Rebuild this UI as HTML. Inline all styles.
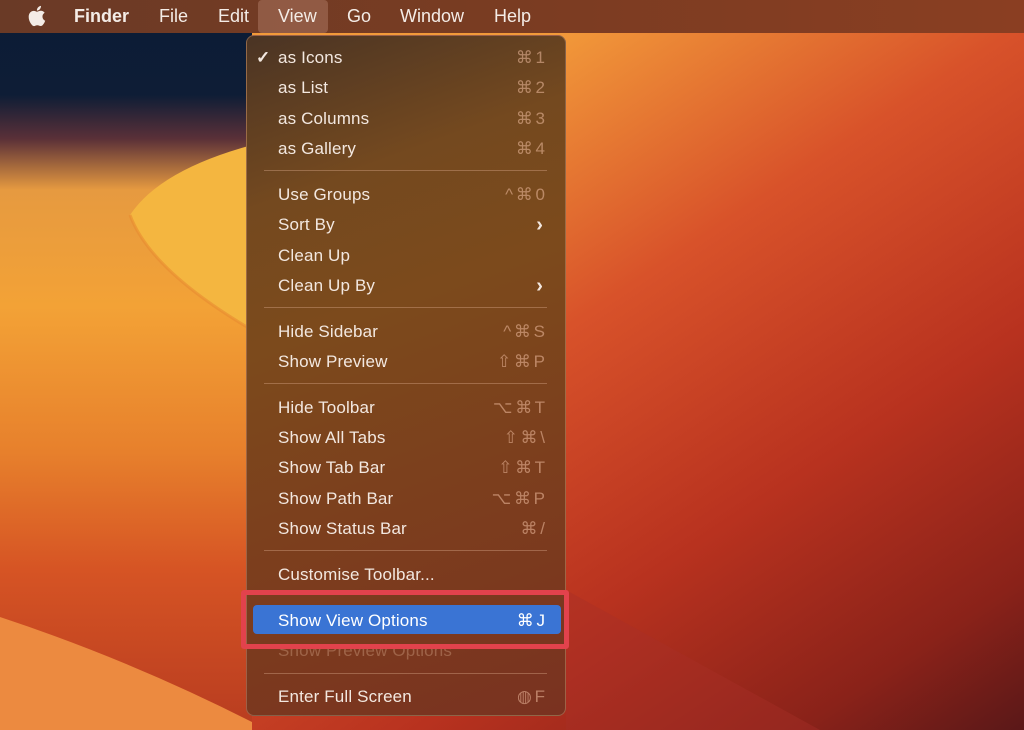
<!DOCTYPE html>
<html><head><meta charset="utf-8"><style>
body{margin:0;width:1024px;height:730px;overflow:hidden;position:relative;font-family:"Liberation Sans",sans-serif;background:#c8401e}
svg.bg{position:absolute;left:0;top:0}
.bar{position:absolute;left:0;top:0;width:1024px;height:33px;background:linear-gradient(90deg,#6a3a26,#7a3c22 50%,#8a3e22);color:#f4ece6;font-size:18px}
.bar span{position:absolute;top:6px}
.menu{position:absolute;left:246px;top:35px;width:320px;height:681px;border-radius:8px;overflow:hidden;border:1px solid rgba(200,150,120,0.45);box-sizing:border-box;
background:linear-gradient(160deg,#4a3424 0%,#74491f 22%,#7c4a1c 40%,#7c3f1d 65%,#7a3220 100%)}
.it{position:absolute;left:31px;right:21px;height:24px;color:#f3e8e0;font-size:17px;line-height:24px;letter-spacing:0.15px}
.it b{position:absolute;right:0;top:0;font-weight:normal;color:rgba(240,190,160,0.55);letter-spacing:-1px;font-size:17px}
.chev{position:absolute;right:1px;top:0;color:#f3e8e0;font-weight:bold;font-size:20px}
.sep{position:absolute;left:17px;right:18px;height:1px;background:rgba(220,170,140,0.4)}
</style></head><body>
<svg class="bg" width="1024" height="730" viewBox="0 0 1024 730">
<defs>
<linearGradient id="g0" gradientUnits="userSpaceOnUse" x1="560" y1="30" x2="1024" y2="730">
<stop offset="0" stop-color="#f29a3a"/><stop offset="0.3" stop-color="#d8522a"/><stop offset="0.6" stop-color="#b8321f"/><stop offset="0.85" stop-color="#8a2219"/><stop offset="1" stop-color="#5a1818"/></linearGradient>
<linearGradient id="lf" x1="0" y1="0" x2="0" y2="1">
<stop offset="0" stop-color="#0b1c35"/><stop offset="0.13" stop-color="#0e1d36"/><stop offset="0.19" stop-color="#5a3038"/><stop offset="0.26" stop-color="#e69a40"/><stop offset="0.42" stop-color="#f3a236"/><stop offset="0.62" stop-color="#e7802c"/><stop offset="0.78" stop-color="#d65424"/><stop offset="1" stop-color="#b83c20"/></linearGradient>
</defs>
<rect width="1024" height="730" fill="url(#g0)"/>
<rect x="0" y="0" width="252" height="730" fill="url(#lf)"/>
<path d="M252 145 Q160 170 130 215 Q150 270 252 330 Z" fill="#f4b640"/>
<path d="M130 215 Q150 270 252 330" stroke="#e88a30" stroke-width="3" fill="none" opacity="0.6"/>
<path d="M0 617 Q130 660 252 722 V730 H0 Z" fill="#ec8a40"/>
<path d="M566 590 L820 730 H566 Z" fill="#a83028" opacity="0.4"/>
</svg>
<div class="bar">
<svg style="position:absolute;left:26px;top:4px" width="22" height="24" viewBox="0 0 24 24"><path fill="#f4ece6" d="M16.365 1.43c0 1.14-.493 2.27-1.177 3.08-.744.9-1.99 1.57-2.987 1.57-.12 0-.23-.02-.3-.03-.01-.06-.04-.22-.04-.39 0-1.150.572-2.270 1.206-2.980.804-.94 2.142-1.64 3.248-1.680.03.13.05.28.05.43zm4.565 15.71c-.03.07-.463 1.58-1.518 3.12-.945 1.34-1.94 2.71-3.43 2.71-1.517 0-1.9-.88-3.63-.88-1.698 0-2.302.91-3.670.91-1.377 0-2.332-1.260-3.428-2.800-1.287-1.820-2.323-4.630-2.323-7.280 0-4.280 2.797-6.550 5.552-6.550 1.448 0 2.675.95 3.6.95.865 0 2.222-1.010 3.902-1.010.613 0 2.886.06 4.374 2.190-.13.09-2.383 1.370-2.383 4.190 0 3.260 2.854 4.420 2.955 4.450z"/></svg>
<div style="position:absolute;left:258px;top:0;width:70px;height:33px;background:rgba(200,150,130,0.35);border-radius:4px"></div>
<span style="left:74px;font-weight:bold">Finder</span>
<span style="left:159px">File</span>
<span style="left:218px">Edit</span>
<span style="left:278px">View</span>
<span style="left:347px">Go</span>
<span style="left:400px">Window</span>
<span style="left:494px">Help</span>
</div>
<div class="menu">
<div class="it" style="top:10px"><span style="position:absolute;left:-22px;font-weight:bold">✓</span>as Icons<b>⌘ 1</b></div>
<div class="it" style="top:40px">as List<b>⌘ 2</b></div>
<div class="it" style="top:71px">as Columns<b>⌘ 3</b></div>
<div class="it" style="top:101px">as Gallery<b>⌘ 4</b></div>
<div class="sep" style="top:134px"></div>
<div class="it" style="top:147px">Use Groups<b>^ ⌘ 0</b></div>
<div class="it" style="top:177px">Sort By<span class="chev">›</span></div>
<div class="it" style="top:208px">Clean Up</div>
<div class="it" style="top:238px">Clean Up By<span class="chev">›</span></div>
<div class="sep" style="top:271px"></div>
<div class="it" style="top:284px">Hide Sidebar<b>^ ⌘ S</b></div>
<div class="it" style="top:314px">Show Preview<b>⇧ ⌘ P</b></div>
<div class="sep" style="top:347px"></div>
<div class="it" style="top:360px">Hide Toolbar<b>⌥ ⌘ T</b></div>
<div class="it" style="top:390px">Show All Tabs<b>⇧ ⌘ \</b></div>
<div class="it" style="top:420px">Show Tab Bar<b>⇧ ⌘ T</b></div>
<div class="it" style="top:451px">Show Path Bar<b>⌥ ⌘ P</b></div>
<div class="it" style="top:481px">Show Status Bar<b>⌘ /</b></div>
<div class="sep" style="top:514px"></div>
<div class="it" style="top:527px">Customise Toolbar...</div>
<div style="position:absolute;left:6px;top:569px;width:308px;height:29px;background:#3a74d4;border-radius:4px"></div>
<div class="it" style="top:573px;color:#fff">Show View Options<b style="color:#fff">⌘ J</b></div>
<div class="it" style="top:603px;color:rgba(240,200,170,0.3)">Show Preview Options</div>
<div class="sep" style="top:637px"></div>
<div class="it" style="top:649px">Enter Full Screen<b>◍ F</b></div>
</div>
<div style="position:absolute;left:241px;top:590px;width:328px;height:59px;border:5px solid #e2424c;box-sizing:border-box;border-radius:3px"></div>
</body></html>
